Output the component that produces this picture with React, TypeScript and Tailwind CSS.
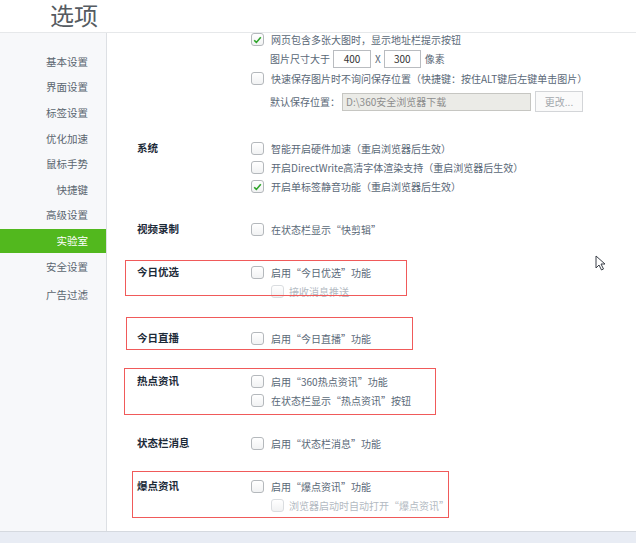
import React from "react";

const sideItems = ["基本设置", "界面设置", "标签设置", "优化加速", "鼠标手势", "快捷键", "高级设置", "实验室", "安全设置", "广告过滤"];

function Box({ checked = false, disabled = false }: { checked?: boolean; disabled?: boolean }) {
  return (
    <span
      className={
        "w-[13px] h-[13px] shrink-0 rounded-[3px] border flex items-center justify-center bg-gradient-to-b from-white to-[#f1f2f3] " +
        (disabled ? "border-[#dadde0]" : "border-[#b4b8bc]")
      }
    >
      {checked && (
        <svg width="9" height="8" viewBox="0 0 9 8">
          <path d="M1.2 4.2 L3.4 6.4 L7.8 1.2" fill="none" stroke="#2fa52a" strokeWidth="1.6" />
        </svg>
      )}
    </span>
  );
}

function Opt({ text, checked }: { text: string; checked?: boolean }) {
  return (
    <div className="h-[19px] flex items-center gap-[7px]">
      <Box checked={checked} />
      <span>{text}</span>
    </div>
  );
}

function SubOpt({ text }: { text: string }) {
  return (
    <div className="h-[19px] flex items-center gap-[5px] pl-[20px] text-[#b3bac2]">
      <Box disabled />
      <span>{text}</span>
    </div>
  );
}

function Section({ label, className, children }: { label: string; className: string; children: React.ReactNode }) {
  return (
    <div className={"flex " + className}>
      <div className="w-[114px] h-[19px] flex items-center font-bold text-[10.5px] text-[#1c2a38]">{label}</div>
      <div className="flex flex-col">{children}</div>
    </div>
  );
}

export default function App() {
  return (
    <div className="relative w-[636px] h-[543px] flex flex-col bg-white overflow-hidden font-['Noto_Sans_CJK_SC',sans-serif] leading-none">
      <header className="h-[33px] shrink-0 border-b border-[#e6e8ea] flex items-start pl-[50px]">
        <span className="block text-[24px] leading-[29px] text-[#555b61]">选项</span>
      </header>

      <div className="flex flex-1 min-h-0">
        <aside className="w-[107px] shrink-0 bg-[#f7f8fa] border-r border-[#dde0e4] flex flex-col gap-[1.6px] pt-[17px] text-[10.5px] text-[#5b6670]">
          {sideItems.map((s, i) => (
            <div
              key={s}
              className={
                "h-[24px] flex items-center justify-end pr-[18px] " +
                (s === "实验室" ? "bg-[#52b81e] text-white " : "") +
                (i === sideItems.length - 1 ? "mt-[3px]" : "")
              }
            >
              {s}
            </div>
          ))}
        </aside>

        <main className="flex-1 overflow-hidden text-[10px] text-[#5a6877]">
          <div className="-mt-[3px] pl-[30px] flex flex-col">
            <div className="flex">
              <div className="w-[114px]" />
              <div className="flex flex-col">
                <Opt checked text="网页包含多张大图时，显示地址栏提示按钮" />
                <div className="h-[20px] flex items-center pl-[19px]">
                  <span>图片尺寸大于</span>
                  <span className="ml-[3px] w-[38px] h-[18px] border border-[#b9bcc0] bg-white flex items-center justify-center text-[#333]">400</span>
                  <span className="ml-[4px]">X</span>
                  <span className="ml-[3px] w-[37px] h-[18px] border border-[#b9bcc0] bg-white flex items-center justify-center text-[#333]">300</span>
                  <span className="ml-[4px]">像素</span>
                </div>
                <Opt text="快速保存图片时不询问保存位置（快捷键：按住ALT键后左键单击图片）" />
                <div className="h-[21px] mt-[3px] flex items-center pl-[19px]">
                  <span>默认保存位置：</span>
                  <span className="ml-[2px] w-[189px] h-[18px] border border-[#c6c6c2] bg-[#ebebe7] flex items-center pl-[3px] text-[#8d8d8d]">D:\360安全浏览器下载</span>
                  <span className="ml-[4px] w-[48px] h-[21px] border border-[#d3d5d8] bg-[#fafafa] flex items-center justify-center text-[#a3a8ad]">更改...</span>
                </div>
              </div>
            </div>

            <Section label="系统" className="mt-[27px]">
              <Opt text="智能开启硬件加速（重启浏览器后生效）" />
              <Opt text="开启DirectWrite高清字体渲染支持（重启浏览器后生效）" />
              <Opt checked text="开启单标签静音功能（重启浏览器后生效）" />
            </Section>

            <Section label="视频录制" className="mt-[24px]">
              <Opt text="在状态栏显示“快剪辑”" />
            </Section>

            <Section label="今日优选" className="mt-[24px]">
              <Opt text="启用“今日优选”功能" />
              <SubOpt text="接收消息推送" />
            </Section>

            <Section label="今日直播" className="mt-[28px]">
              <Opt text="启用“今日直播”功能" />
            </Section>

            <Section label="热点资讯" className="mt-[24px]">
              <Opt text="启用“360热点资讯”功能" />
              <Opt text="在状态栏显示“热点资讯”按钮" />
            </Section>

            <Section label="状态栏消息" className="mt-[24px]">
              <Opt text="启用“状态栏消息”功能" />
            </Section>

            <Section label="爆点资讯" className="mt-[24px]">
              <Opt text="启用“爆点资讯”功能" />
              <SubOpt text="浏览器启动时自动打开“爆点资讯”" />
            </Section>
          </div>
        </main>
      </div>

      <footer className="h-[12px] shrink-0 bg-[#e8ecf4] border-t border-[#d5d9df]" />

      {/* red annotation frames drawn over the page */}
      <div className="absolute left-[125px] top-[260px] w-[282px] h-[36px] border-[1.5px] border-[#f05a5a]" />
      <div className="absolute left-[126px] top-[317px] w-[287px] h-[33px] border-[1.5px] border-[#f05a5a]" />
      <div className="absolute left-[124px] top-[368px] w-[312px] h-[47px] border-[1.5px] border-[#f05a5a]" />
      <div className="absolute left-[132px] top-[471px] w-[317px] h-[47px] border-[1.5px] border-[#f05a5a]" />

      <svg className="absolute left-[595px] top-[255px]" width="12" height="17" viewBox="0 0 12 17">
        <path d="M1 1 L1 13 L4 10 L6.5 15 L8.5 14 L6 9 L10 9 Z" fill="white" stroke="#3a3f48" strokeWidth="1" strokeLinejoin="round" />
      </svg>
    </div>
  );
}
